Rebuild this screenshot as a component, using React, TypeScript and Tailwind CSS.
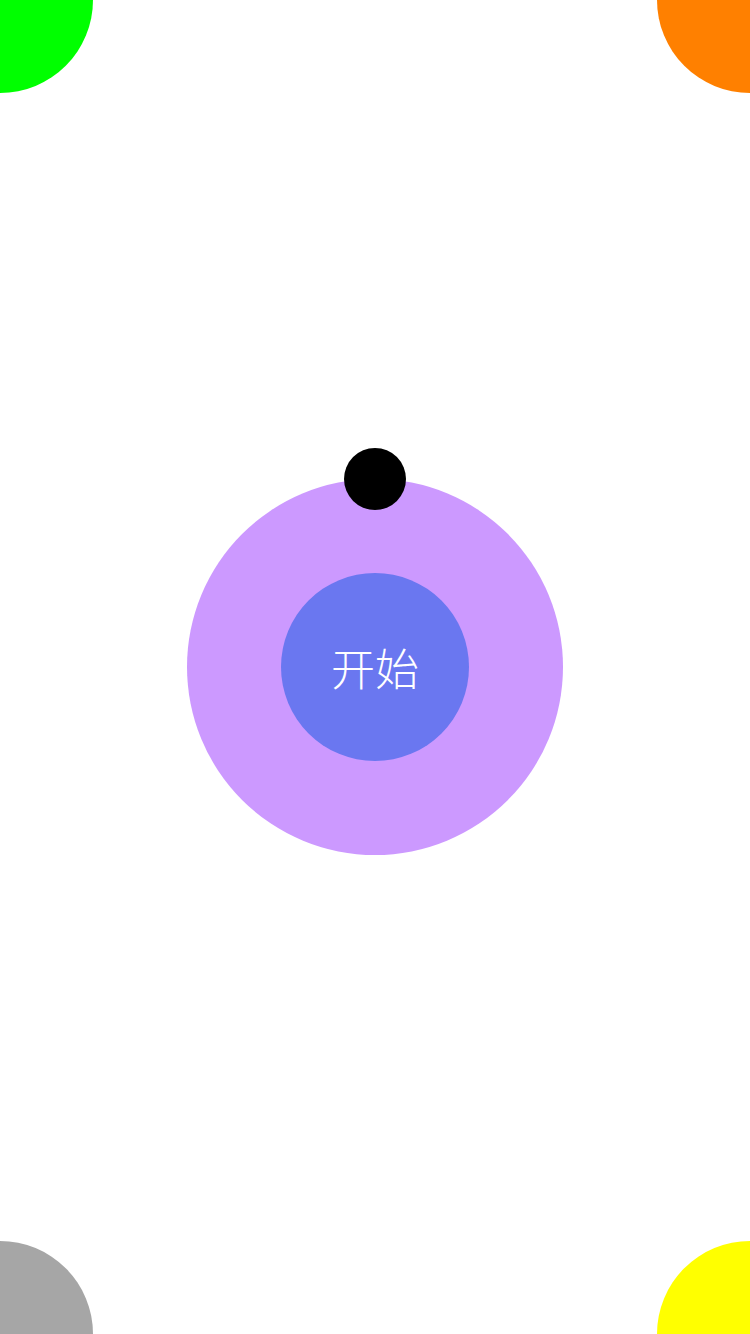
import React from "react";

export default function App() {
  return (
    <div className="relative w-[750px] h-[1334px] overflow-hidden bg-white" style={{ fontFamily: '"Noto Sans CJK SC", "Noto Sans", sans-serif' }}>
      <div className="absolute left-[-93px] top-[-93px] w-[186px] h-[186px] rounded-full bg-[#00ff00]" />
      <div className="absolute right-[-93px] top-[-93px] w-[186px] h-[186px] rounded-full bg-[#ff8000]" />
      <div className="absolute left-[-93px] bottom-[-93px] w-[186px] h-[186px] rounded-full bg-[#a6a6a6]" />
      <div className="absolute right-[-93px] bottom-[-93px] w-[186px] h-[186px] rounded-full bg-[#ffff00]" />
      <div className="flex h-full items-center justify-center">
        <div className="relative flex w-[376px] h-[376px] items-center justify-center rounded-full bg-[#cc99ff]">
          <div className="absolute left-[157px] top-[-31px] w-[62px] h-[62px] rounded-full bg-black" />
          <div className="flex w-[188px] h-[188px] items-center justify-center rounded-full bg-[#6a77f0]">
            <span className="text-[44px] leading-none font-light text-white">开始</span>
          </div>
        </div>
      </div>
    </div>
  );
}
